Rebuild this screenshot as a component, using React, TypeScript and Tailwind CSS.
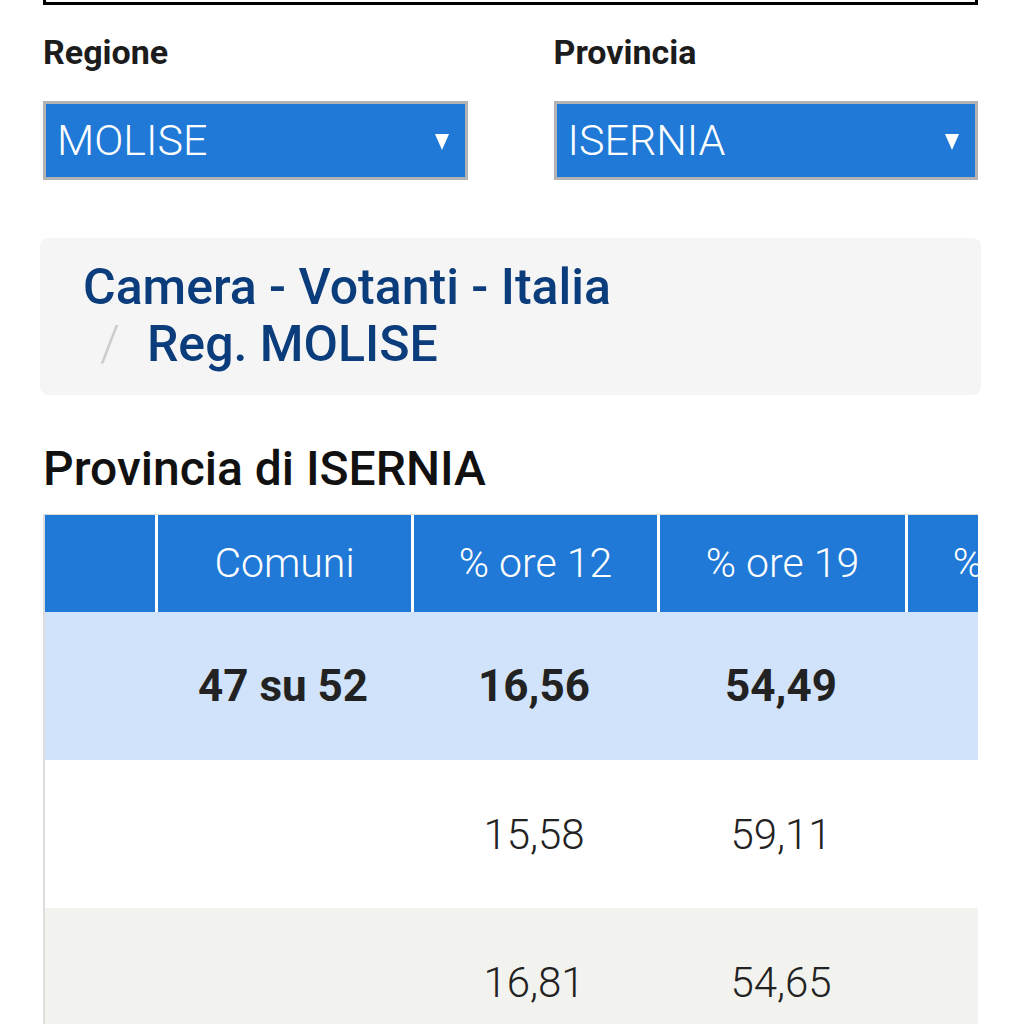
import React from "react";

const cols = [112, 256, 246, 248, 246];

function Caret() {
  return (
    <svg width="14" height="18" viewBox="0 0 14 18" className="shrink-0">
      <polygon points="0,2 14,2 7,18" fill="white" />
    </svg>
  );
}

function Select({ value }: { value: string }) {
  return (
    <div className="flex h-[79px] items-center justify-between border-[3px] border-[#b3b3b3] bg-[#2079d6] pl-[11px] pr-[16px]">
      <span className="text-[43px] font-light leading-none text-white">{value}</span>
      <Caret />
    </div>
  );
}

type Row = { bg: string; bold?: boolean; cells: string[] };

const rows: Row[] = [
  { bg: "bg-[#d0e3fa]", bold: true, cells: ["", "47 su 52", "16,56", "54,49", ""] },
  { bg: "bg-white", cells: ["", "", "15,58", "59,11", ""] },
  { bg: "bg-[#f2f2ee]", cells: ["", "", "16,81", "54,65", ""] },
];

export default function App() {
  return (
    <div className="min-h-[1024px] bg-white px-[43px] text-[#1c1c1c]" style={{ fontFamily: "Roboto, 'Liberation Sans', sans-serif" }}>
      <div className="h-[5px] border-x-[3px] border-b-[3px] border-black" />

      <div className="mt-[30px] grid grid-cols-2 gap-x-[86px]">
        <div>
          <div className="text-[34px] font-bold leading-none text-[#1c1c1c]">Regione</div>
          <div className="mt-[32px]">
            <Select value="MOLISE" />
          </div>
        </div>
        <div>
          <div className="text-[34px] font-bold leading-none text-[#1c1c1c]">Provincia</div>
          <div className="mt-[32px]">
            <Select value="ISERNIA" />
          </div>
        </div>
      </div>

      <div className="-mx-[3px] mt-[58px] rounded-[8px] bg-[#f5f5f5] pb-[22px] pl-[43px] pt-[21px] text-[50px] font-medium leading-[57px] text-[#0b3c7b]">
        <div>Camera - Votanti - Italia</div>
        <div className="flex items-baseline pl-[17px]">
          <span className="mr-[27px] font-light text-[#cccccc]">/</span>
          <span>Reg. MOLISE</span>
        </div>
      </div>

      <h2 className="mt-[50px] text-[48px] font-medium leading-none text-[#111]">Provincia di ISERNIA</h2>

      <div className="mt-[21px] overflow-hidden border-l-2 border-t border-[#dddddd]">
        <div className="flex w-max">
          {cols.map((w, i) => (
            <div
              key={i}
              style={{ width: w - (i === 0 ? 2 : 0) }}
              className={`flex h-[97px] items-center justify-center bg-[#2079d6] text-[41px] font-light text-white ${i > 0 ? "border-l-[3px] border-white" : ""}`}
            >
              {["", "Comuni", "% ore 12", "% ore 19", "% ore 23"][i]}
            </div>
          ))}
        </div>
        {rows.map((r, ri) => (
          <div key={ri} className={`flex w-max ${r.bg}`}>
            {cols.map((w, i) => (
              <div
                key={i}
                style={{ width: w - (i === 0 ? 2 : 0) }}
                className={`flex h-[148px] items-center justify-center text-[#222] ${r.bold ? "text-[44px] font-bold" : "text-[42px] font-light"}`}
              >
                {r.cells[i]}
              </div>
            ))}
          </div>
        ))}
      </div>
    </div>
  );
}
